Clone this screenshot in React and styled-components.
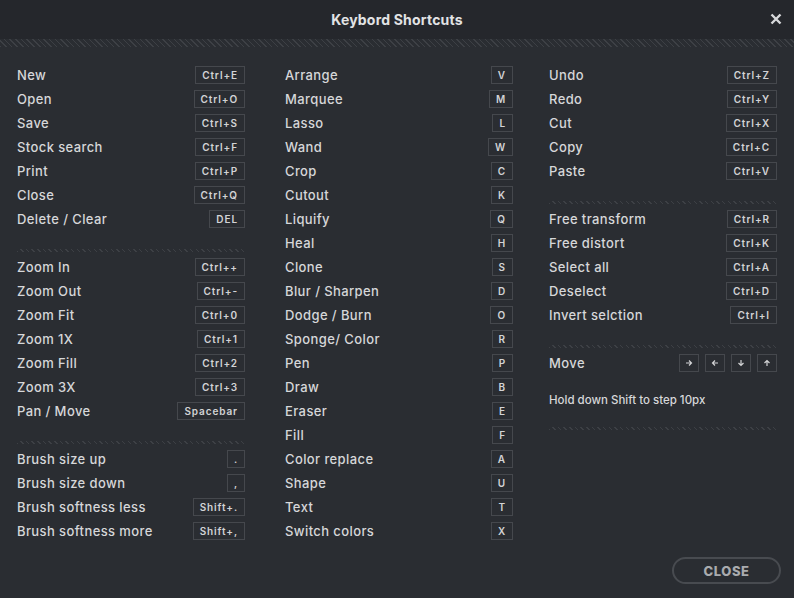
import styled, { createGlobalStyle } from "styled-components";

const GlobalStyle = createGlobalStyle`
  html, body {
    margin: 0;
    padding: 0;
    background: #2a2d32;
  }
  * { box-sizing: border-box; }
`;

const hatch = `repeating-linear-gradient(45deg, #3d4045 0px, #3d4045 1px, transparent 1px, transparent 4px)`;

const Modal = styled.div`
  width: 794px;
  height: 598px;
  background: #2a2d32;
  font-family: "Inter", "Open Sans", sans-serif;
  color: #d6d7d9;
  display: flex;
  flex-direction: column;
  overflow: hidden;
`;

const Header = styled.div`
  position: relative;
  height: 39px;
  background: #25272c;
  display: flex;
  align-items: center;
  justify-content: center;
`;

const Title = styled.h1`
  margin: 0;
  font-size: 14px;
  font-weight: 700;
  letter-spacing: 0.2px;
  color: #e2e3e5;
`;

const CloseX = styled.button`
  position: absolute;
  right: 10px;
  top: 11px;
  width: 16px;
  height: 16px;
  padding: 0;
  border: 0;
  background: transparent;
  display: flex;
  align-items: center;
  justify-content: center;
  cursor: pointer;
`;

const HeaderHatch = styled.div`
  height: 8px;
  background: ${hatch};
  background-color: #2a2d32;
`;

const Body = styled.div`
  display: grid;
  grid-template-columns: 268px 264px 228px;
  padding: 16px 0 0 17px;
  align-items: start;
`;

const Column = styled.div`
  width: 228px;
  display: flex;
  flex-direction: column;
`;

const Row = styled.div`
  height: 24px;
  display: flex;
  align-items: center;
  justify-content: space-between;
`;

const Label = styled.span`
  font-size: 13px;
  font-weight: 500;
  letter-spacing: 0.4px;
  color: #d6d7d9;
`;

const Keys = styled.div`
  display: flex;
  gap: 6px;
`;

const Key = styled.span`
  height: 18px;
  min-width: ${(p) => (p.$arrow ? "20px" : "0")};
  padding: 0 ${(p) => (p.$arrow ? "0" : "6px")};
  border: 1px solid #45484d;
  display: inline-flex;
  align-items: center;
  justify-content: center;
  font-size: 10px;
  font-weight: 600;
  letter-spacing: 0.9px;
  color: #d2d3d5;
`;

const Separator = styled.div`
  height: ${(p) => p.$h || "24px"};
  display: flex;
  align-items: flex-end;
  padding-bottom: 3px;
  &::before {
    content: "";
    display: block;
    width: 100%;
    height: 3px;
    background: ${hatch};
  }
`;

const Note = styled.div`
  height: 50px;
  display: flex;
  align-items: center;
  font-size: 11.5px;
  font-weight: 500;
  color: #d6d7d9;
`;

const Footer = styled.div`
  margin-top: auto;
  display: flex;
  justify-content: flex-end;
  padding: 0 13px 14px 0;
`;

const CloseButton = styled.button`
  width: 109px;
  height: 27px;
  border: 2px solid #484b50;
  border-radius: 14px;
  background: transparent;
  font-family: "Inter", "Open Sans", sans-serif;
  font-size: 13px;
  font-weight: 800;
  letter-spacing: 0.6px;
  color: #a9abae;
  cursor: pointer;
`;

const Arrow = ({ rot }) => (
  <svg width="8" height="8" viewBox="0 0 8 8" style={{ transform: `rotate(${rot}deg)` }}>
    <path d="M1 4h5.5M4 1.5L6.5 4L4 6.5" fill="none" stroke="#d2d3d5" strokeWidth="1.2" />
  </svg>
);

const col1 = [
  ["New", "Ctrl+E"], ["Open", "Ctrl+O"], ["Save", "Ctrl+S"], ["Stock search", "Ctrl+F"],
  ["Print", "Ctrl+P"], ["Close", "Ctrl+Q"], ["Delete / Clear", "DEL"], null,
  ["Zoom In", "Ctrl++"], ["Zoom Out", "Ctrl+-"], ["Zoom Fit", "Ctrl+0"], ["Zoom 1X", "Ctrl+1"],
  ["Zoom Fill", "Ctrl+2"], ["Zoom 3X", "Ctrl+3"], ["Pan / Move", "Spacebar"], null,
  ["Brush size up", "."], ["Brush size down", ","], ["Brush softness less", "Shift+."],
  ["Brush softness more", "Shift+,"],
];

const col2 = [
  ["Arrange", "V"], ["Marquee", "M"], ["Lasso", "L"], ["Wand", "W"], ["Crop", "C"],
  ["Cutout", "K"], ["Liquify", "Q"], ["Heal", "H"], ["Clone", "S"], ["Blur / Sharpen", "D"],
  ["Dodge / Burn", "O"], ["Sponge/ Color", "R"], ["Pen", "P"], ["Draw", "B"], ["Eraser", "E"],
  ["Fill", "F"], ["Color replace", "A"], ["Shape", "U"], ["Text", "T"], ["Switch colors", "X"],
];

const col3 = [
  ["Undo", "Ctrl+Z"], ["Redo", "Ctrl+Y"], ["Cut", "Ctrl+X"], ["Copy", "Ctrl+C"],
  ["Paste", "Ctrl+V"], null, ["Free transform", "Ctrl+R"], ["Free distort", "Ctrl+K"],
  ["Select all", "Ctrl+A"], ["Deselect", "Ctrl+D"], ["Invert selction", "Ctrl+I"], null,
];

const renderItems = (items) =>
  items.map((it, i) =>
    it ? (
      <Row key={i}>
        <Label>{it[0]}</Label>
        <Key>{it[1]}</Key>
      </Row>
    ) : (
      <Separator key={i} />
    )
  );

export default function App() {
  return (
    <>
      <GlobalStyle />
      <Modal>
        <Header>
          <Title>Keybord Shortcuts</Title>
          <CloseX aria-label="close">
            <svg width="12" height="12" viewBox="0 0 12 12">
              <path d="M1.5 1.5l9 9M10.5 1.5l-9 9" stroke="#d8d9db" strokeWidth="2.4" />
            </svg>
          </CloseX>
        </Header>
        <HeaderHatch />
        <Body>
          <Column>{renderItems(col1)}</Column>
          <Column>{renderItems(col2)}</Column>
          <Column>
            {renderItems(col3)}
            <Row>
              <Label>Move</Label>
              <Keys>
                <Key $arrow><Arrow rot={0} /></Key>
                <Key $arrow><Arrow rot={180} /></Key>
                <Key $arrow><Arrow rot={90} /></Key>
                <Key $arrow><Arrow rot={-90} /></Key>
              </Keys>
            </Row>
            <Note>Hold down Shift to step 10px</Note>
            <Separator $h="8px" />
          </Column>
        </Body>
        <Footer>
          <CloseButton>CLOSE</CloseButton>
        </Footer>
      </Modal>
    </>
  );
}
